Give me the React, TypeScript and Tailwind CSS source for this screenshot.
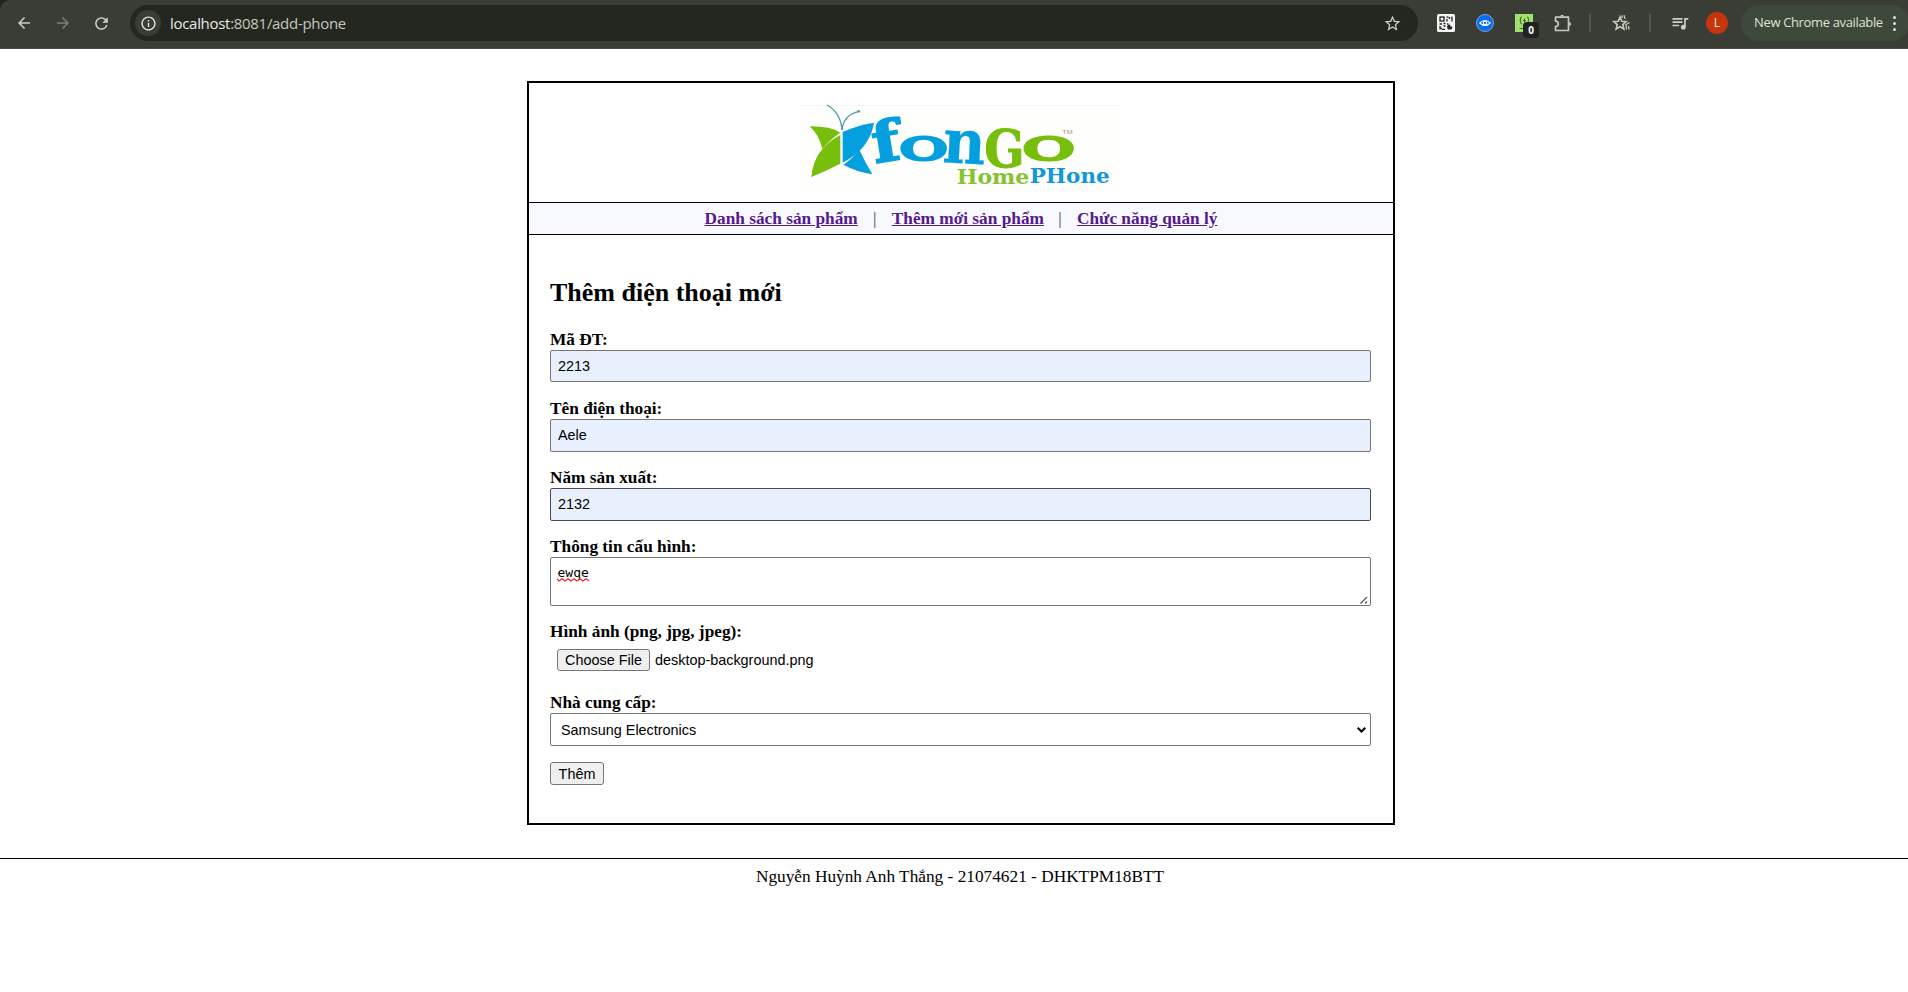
import type { ReactNode } from "react";
import { MdArrowBack, MdArrowForward, MdInfoOutline, MdQueueMusic, MdRefresh, MdStarBorder } from "react-icons/md";

function QrIcon() {
  return (
    <svg viewBox="0 0 18 18" className="size-[18px]">
      <rect width="18" height="18" rx="1.5" fill="#f4f4f4" />
      <g fill="none" stroke="#222" strokeWidth="1.3">
        <rect x="3" y="3" width="4" height="4" />
        <path d="M9.500 3.200h2M10 5v2.500M12.500 3v2M15 2.500v5M2.500 10h2.500M6.500 9.500h2M10 10h1.500M3 12v2.500h2M6.500 12h2M5 15.300h3" />
      </g>
      <circle cx="12.700" cy="13" r="2.600" fill="#222" />
      <path d="M13.200 12.500V10h2.500v2.500z" fill="#f4f4f4" />
    </svg>
  );
}

function EyeIcon() {
  return (
    <svg viewBox="0 0 18 18" className="size-[18px]">
      <circle cx="9" cy="9" r="8.500" fill="#0b6cf0" stroke="#8db7f0" strokeWidth=".8" />
      <path d="M3.800 9Q9 4 14.200 9Q9 14 3.800 9z" fill="none" stroke="#fff" strokeWidth="1.100" />
      <circle cx="9" cy="9" r="1.700" fill="none" stroke="#fff" strokeWidth="1.100" />
    </svg>
  );
}

function BracesIcon() {
  return (
    <div className="relative size-[18px] bg-[#a3e072]">
      <svg viewBox="0 0 18 18" className="size-[18px]" fill="none" stroke="#476b2b" strokeWidth="1.100">
        <path d="M7 3Q5.500 3 5.700 5Q5.700 6.500 4.500 6.500Q5.700 6.500 5.700 8Q5.500 10 7 10M12 3Q13.500 3 13.300 5Q13.300 6.500 14.500 6.500Q13.300 6.500 13.300 8Q13.500 10 12 10M9.500 4.500v4M8 6.500h3M4.500 14.500h4" />
      </svg>
      <span className="absolute top-2 left-2 flex h-4 w-4 items-center justify-center rounded-[4px] bg-[#222] font-['Open_Sans',sans-serif] text-[10px] font-bold text-white">
        0
      </span>
    </div>
  );
}

function PuzzleIcon() {
  return (
    <svg viewBox="0 0 18 18" className="size-[18px]" fill="none" stroke="#c3cabd" strokeWidth="1.700">
      <path d="M1.500 3.200H14.500V16.500H1.500V12.500Q4.300 12.200 4.300 9.900Q4.300 7.500 1.500 7.200Z" strokeLinejoin="round" />
      <path d="M6.200 2.600a1.900 1.900 0 0 1 3.800 0zM15.200 8a1.900 1.900 0 0 1 0 3.800z" fill="#c3cabd" stroke="none" />
    </svg>
  );
}

function StarsIcon() {
  return (
    <svg viewBox="0 0 20 18" className="h-[18px] w-5" fill="none" stroke="#c3cabd" strokeWidth="1.600">
      <path d="M9 3L10.700 7.200L15.200 7.600L11.800 10.600L12.900 15L9 12.700L5.100 15L6.200 10.600L2.800 7.600L7.300 7.200Z" />
      <path d="M10.500 1.500L11.500 4M13 1.200L14 4.800M18.500 8.500L14.800 10.800L15.800 15.500M17.500 12L18 15.500" strokeWidth="1.300" />
    </svg>
  );
}

function BrowserBar() {
  return (
    <div className="h-[49px] bg-[#20241e]">
      <div className="flex h-[49px] items-center overflow-hidden rounded-tl-[10px] border-b border-[#4b4b48] bg-[#3a3d36] pb-[2px] text-[#c9cfc4] *:shrink-0">
        <MdArrowBack className="ml-[15px] size-[18px]" />
        <MdArrowForward className="ml-[21px] size-[18px] text-[#7c8077]" />
        <MdRefresh className="ml-5 size-[19px]" />
        <div className="ml-[19px] flex h-9 w-[1288px] items-center rounded-full bg-[#232720] pr-4 pl-[5px]">
          <span className="flex size-[26px] items-center justify-center rounded-full bg-[#3a3d36]">
            <MdInfoOutline className="size-[17px] text-[#e3e3e0]" />
          </span>
          <span className="ml-[9px] font-['Open_Sans',sans-serif] text-[15px] leading-5 tracking-[-0.3px] text-[#c3c7be]">
            <span className="text-[#e8eae5]">localhost</span>:8081/add-phone
          </span>
          <MdStarBorder className="ml-auto size-[19px]" />
        </div>
        <div className="ml-[19px] flex items-center gap-[21px]">
          <QrIcon />
          <EyeIcon />
          <BracesIcon />
          <PuzzleIcon />
        </div>
        <span className="ml-[17px] h-[18px] w-[2px] bg-[#53574e]" />
        <span className="ml-5">
          <StarsIcon />
        </span>
        <span className="ml-[18px] h-[18px] w-[2px] bg-[#53574e]" />
        <MdQueueMusic className="ml-[19px] size-5" />
        <span className="ml-4 flex size-[22px] items-center justify-center rounded-full bg-[#c5360d] font-['Open_Sans',sans-serif] text-xs text-[#f3e5dc]">
          L
        </span>
        <div className="ml-[13px] flex h-9 w-[168px] items-center rounded-full bg-[#3f493b] pl-[13px]">
          <span className="w-[128px] font-['Open_Sans',sans-serif] text-[13px] tracking-[-0.35px] whitespace-nowrap text-[#dce3d3]">
            New Chrome available
          </span>
          <span className="ml-[11px] flex flex-col gap-[3px]">
            <span className="size-[3px] rounded-full bg-[#dce3d3]" />
            <span className="size-[3px] rounded-full bg-[#dce3d3]" />
            <span className="size-[3px] rounded-full bg-[#dce3d3]" />
          </span>
        </div>
      </div>
    </div>
  );
}

function Logo() {
  return (
    <svg viewBox="63 75 957 258" className="h-[86px] w-[319px] overflow-visible" fontFamily="'DejaVu Serif', serif" fontWeight="bold">
      <rect x="63" y="75" width="957" height="258" fill="#fefefd" />
      <path d="M63 76H1020" stroke="#f3f5fd" strokeWidth="3" />
      <g fill="none" stroke="#4a9fae" strokeWidth="4">
        <path d="M186 150Q182 98 141 75" />
        <path d="M186 150Q190 106 236 94" />
      </g>
      <circle cx="236" cy="94" r="4" fill="#4a9fae" />
      <path d="M89 139Q150 138 181 158Q150 178 127 207Q117 164 89 139Z" fill="#78be0c" />
      <path d="M181 165V251Q140 272 94 291Q101 207 181 165Z" fill="#78be0c" />
      <path d="M188 156Q230 136 282 128Q270 205 188 248Z" fill="#049fdf" />
      <path d="M238 209Q254 244 277 283Q226 274 190 254Q217 236 238 209Z" fill="#049fdf" />
      <g fill="#049fdf" stroke="#049fdf">
        <text transform="translate(285 250) rotate(-9) scale(1.150 1)" fontSize="168" strokeWidth="5">f</text>
        <text transform="translate(354 239) scale(1.880 1)" fontSize="136" fontWeight="normal" strokeWidth="6">o</text>
        <text transform="translate(486 247) rotate(3) scale(.960 1)" fontSize="184" strokeWidth="1">n</text>
      </g>
      <g fill="#78be0c" stroke="#78be0c">
        <text transform="translate(613 260) scale(.920 1)" fontSize="154" strokeWidth="3">G</text>
        <text transform="translate(723 241) scale(2.060 1)" fontSize="134" fontWeight="normal" strokeWidth="6">o</text>
      </g>
      <text x="847" y="163" fontSize="15" fontWeight="normal" fontFamily="'Liberation Sans', sans-serif" fill="#999" textLength="31" lengthAdjust="spacingAndGlyphs">TM</text>
      <text x="530" y="311" fontSize="60" fill="#86c232" textLength="218" lengthAdjust="spacingAndGlyphs">Home</text>
      <text x="749" y="308" fontSize="60" fill="#1497d6" textLength="240" lengthAdjust="spacingAndGlyphs">PHone</text>
    </svg>
  );
}

function NavLink({ children }: { children: ReactNode }) {
  return (
    <a href="#" className="font-bold text-[#551a8b] underline">
      {children}
    </a>
  );
}

function Label({ children }: { children: ReactNode }) {
  return <label className="block h-[19px] text-[17.3px] leading-[17px] font-bold">{children}</label>;
}

const field = "block w-full rounded-[2px] border font-['Liberation_Sans',sans-serif] text-[14.4px] outline-none";

export default function App() {
  return (
    <div className="h-[992px] overflow-hidden bg-white font-['Liberation_Serif',serif] text-[17.3px] text-black">
      <BrowserBar />
      <main className="mt-8 ml-[527px] h-[744px] w-[868px] border-2 border-black">
        <header className="h-[119px] pt-[22px] pl-[272px]">
          <Logo />
        </header>
        <nav className="flex h-[33px] items-center justify-center border-y border-black bg-[#f8f8ff] leading-[19px]">
          <NavLink>Danh sách sản phẩm</NavLink>
          <span className="mx-[15px] w-[4px] text-center text-[#444]">|</span>
          <NavLink>Thêm mới sản phẩm</NavLink>
          <span className="mr-[15px] ml-[14px] w-[4px] text-center text-[#444]">|</span>
          <NavLink>Chức năng quản lý</NavLink>
        </nav>
        <form className="w-[842px] pt-[45px] pl-[21px]">
          <h2 className="h-[51px] text-[26px] leading-[26px] font-bold">Thêm điện thoại mới</h2>
          <div className="mb-[18px]">
            <Label>Mã ĐT:</Label>
            <input className={`${field} h-8 border-[#767676] bg-[#e8f0fe] px-[7px]`} defaultValue="2213" />
          </div>
          <div className="mb-[17px]">
            <Label>Tên điện thoại:</Label>
            <input className={`${field} h-[33px] border-[#767676] bg-[#e8f0fe] px-[7px] pb-[2px]`} defaultValue="Aele" />
          </div>
          <div className="mb-[17px]">
            <Label>Năm sản xuất:</Label>
            <input className={`${field} h-[33px] border-[#4c4c50] bg-[#e8f0fe] px-[7px] pb-[2px]`} defaultValue="2132" />
          </div>
          <div className="mb-[17px]">
            <Label>Thông tin cấu hình:</Label>
            <div className="relative h-[49px] rounded-[2px] border border-[#767676] px-[6.500px] pt-[7px] font-['DejaVu_Sans_Mono',monospace] text-[13px] leading-4">
              <span>ewqe</span>
              <svg viewBox="0 0 32 4" className="absolute top-[20px] left-[6px] h-1 w-8" fill="none" stroke="#f0202c" strokeWidth="1.200">
                <path d="M0 1L2 3L5 .8L8 3L11 .8L14 3L17 .8L20 3L23 .8L26 3L29 .8L32 3" />
              </svg>
              <svg viewBox="0 0 8 8" className="absolute right-[2px] bottom-px size-2" fill="none" stroke="#555" strokeWidth="1.200">
                <path d="M.5 7.500L7 1M5 7.500L7 5.500" />
              </svg>
            </div>
          </div>
          <div className="mb-[17px]">
            <Label>Hình ảnh (png, jpg, jpeg):</Label>
            <div className="flex h-[35px] pt-[7px] pl-[7px] font-['Liberation_Sans',sans-serif] text-[14.4px] leading-5">
              <button type="button" className="h-[22px] w-[93px] rounded-[3px] border border-[#767676] bg-[#efefef] whitespace-nowrap">
                Choose File
              </button>
              <span className="ml-[5px] leading-[22px]">desktop-background.png</span>
            </div>
          </div>
          <div className="mb-4">
            <Label>Nhà cung cấp:</Label>
            <div className={`${field} flex h-[33px] items-center justify-between border-[#767676] pr-[4px] pl-[10px]`}>
              <span className="pt-[2px]">Samsung Electronics</span>
              <svg viewBox="0 0 9 6" className="h-[6px] w-[9px]" fill="none" stroke="#000" strokeWidth="2">
                <path d="M.7 .8L4.500 4.500L8.300 .8" />
              </svg>
            </div>
          </div>
          <button type="button" className="block h-[23px] w-[54px] rounded-[3px] border border-[#767676] bg-[#efefef] pt-px font-['Liberation_Sans',sans-serif] text-[14.4px] leading-[21px]">
            Thêm
          </button>
        </form>
      </main>
      <footer className="mt-[33px] border-t border-black pt-2 pl-[12px] text-center leading-[19px]">
        Nguyễn Huỳnh Anh Thắng - 21074621 - DHKTPM18BTT
      </footer>
    </div>
  );
}
